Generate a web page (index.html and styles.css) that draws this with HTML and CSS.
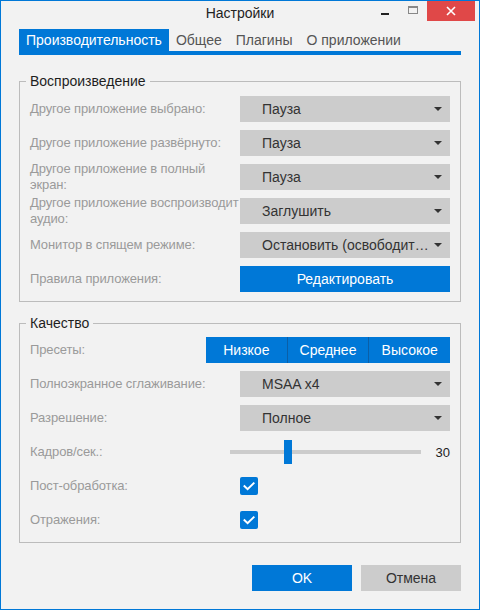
FILE: index.html
```html
<!DOCTYPE html>
<html lang="ru">
<head>
<meta charset="utf-8">
<title>Настройки</title>
<link rel="stylesheet" href="styles.css">
</head>
<body>
<div class="window">
  <div class="titlebar">
    <div class="tb-spacer"></div>
    <div class="title">Настройки</div>
    <div class="controls">
      <span class="ctl ctl-min"><span class="min-line"></span></span>
      <span class="ctl ctl-max"><span class="max-box"></span></span>
      <span class="ctl ctl-close">
        <svg width="10" height="10" viewBox="0 0 10 10"><path d="M1 1L9 9M9 1L1 9" stroke="#fff" stroke-width="1.6" fill="none"/></svg>
      </span>
    </div>
  </div>
  <div class="content">
    <div class="tabs">
      <span class="tab active">Производительность</span>
      <span class="tab">Общее</span>
      <span class="tab">Плагины</span>
      <span class="tab">О приложении</span>
    </div>

    <fieldset class="group group-first">
      <legend>Воспроизведение</legend>
      <div class="rows">
        <div class="row">
          <span class="label">Другое приложение выбрано:</span>
          <span class="select"><span class="sel-text">Пауза</span><span class="arrow"></span></span>
        </div>
        <div class="row">
          <span class="label">Другое приложение развёрнуто:</span>
          <span class="select"><span class="sel-text">Пауза</span><span class="arrow"></span></span>
        </div>
        <div class="row">
          <span class="label">Другое приложение в полный экран:</span>
          <span class="select"><span class="sel-text">Пауза</span><span class="arrow"></span></span>
        </div>
        <div class="row">
          <span class="label">Другое приложение воспроизводит аудио:</span>
          <span class="select"><span class="sel-text">Заглушить</span><span class="arrow"></span></span>
        </div>
        <div class="row">
          <span class="label">Монитор в спящем режиме:</span>
          <span class="select"><span class="sel-text">Остановить (освободит…</span><span class="arrow"></span></span>
        </div>
        <div class="row">
          <span class="label">Правила приложения:</span>
          <span class="btn btn-primary btn-wide">Редактировать</span>
        </div>
      </div>
    </fieldset>

    <fieldset class="group group-second">
      <legend>Качество</legend>
      <div class="rows">
        <div class="row">
          <span class="label">Пресеты:</span>
          <span class="presets">
            <span class="preset">Низкое</span>
            <span class="preset">Среднее</span>
            <span class="preset">Высокое</span>
          </span>
        </div>
        <div class="row">
          <span class="label">Полноэкранное сглаживание:</span>
          <span class="select"><span class="sel-text">MSAA x4</span><span class="arrow"></span></span>
        </div>
        <div class="row">
          <span class="label">Разрешение:</span>
          <span class="select"><span class="sel-text">Полное</span><span class="arrow"></span></span>
        </div>
        <div class="row">
          <span class="label">Кадров/сек.:</span>
          <span class="slider">
            <span class="track"><span class="thumb"></span></span>
            <span class="value">30</span>
          </span>
        </div>
        <div class="row">
          <span class="label">Пост-обработка:</span>
          <span class="check-wrap"><span class="checkbox"><svg width="18" height="18" viewBox="0 0 18 18"><path d="M4.5 9.2L7.6 12.2L13.6 6.3" stroke="#fff" stroke-width="2" fill="none" stroke-linecap="square"/></svg></span></span>
        </div>
        <div class="row">
          <span class="label">Отражения:</span>
          <span class="check-wrap"><span class="checkbox"><svg width="18" height="18" viewBox="0 0 18 18"><path d="M4.5 9.2L7.6 12.2L13.6 6.3" stroke="#fff" stroke-width="2" fill="none" stroke-linecap="square"/></svg></span></span>
        </div>
      </div>
    </fieldset>

    <div class="footer">
      <span class="btn btn-primary btn-dialog">OK</span>
      <span class="btn btn-secondary btn-dialog">Отмена</span>
    </div>
  </div>
</div>
</body>
</html>
```

FILE: styles.css
```css
* { box-sizing: border-box; }

html, body {
  margin: 0;
  padding: 0;
  background: #f2f2f2;
}

body {
  font-family: "Liberation Sans", Arial, sans-serif;
  font-size: 13px;
  color: #333;
}

.window {
  width: 480px;
  height: 610px;
  border: 1px solid #0078d7;
  background: #f2f2f2;
  display: flex;
  flex-direction: column;
}

.titlebar {
  height: 28px;
  display: grid;
  grid-template-columns: 1fr auto 1fr;
  align-items: start;
}

.title {
  font-size: 14px;
  line-height: 16px;
  margin-top: 4px;
  color: #222;
}

.controls {
  justify-self: end;
  display: flex;
  align-items: flex-start;
  margin-right: 4px;
}

.ctl {
  display: flex;
  align-items: center;
  justify-content: center;
  height: 20px;
}

.ctl-min { width: 28px; }
.min-line {
  display: block;
  width: 8px;
  height: 2px;
  background: #222;
  margin-top: 6px;
}

.ctl-max { width: 28px; }
.max-box {
  display: block;
  width: 10px;
  height: 8px;
  border: 1px solid #888;
  border-top-width: 2px;
  margin-top: -2px;
}

.ctl-close {
  width: 48px;
  background: #e04848;
}

.content {
  padding: 0 18px;
  display: flex;
  flex-direction: column;
}

.tabs {
  display: flex;
  border-bottom: 4px solid #0078d7;
  height: 26px;
}

.tab {
  font-size: 14px;
  line-height: 22px;
  padding: 0 7px;
  color: #555;
}

.tab.active {
  background: #0078d7;
  color: #fff;
}

.group {
  margin: 0;
  padding: 7px 10px 9px;
  border: 1px solid #bcbcbc;
  min-inline-size: 0;
}

.group-first { margin-top: 18px; }
.group-second {
  margin-top: 13px;
  padding-top: 6px;
}

.group legend {
  font-size: 14px;
  line-height: 16px;
  padding: 0 4px;
  margin-left: -4px;
  color: #1e1e1e;
}

.rows {
  display: flex;
  flex-direction: column;
  gap: 8px;
}

.row {
  display: flex;
  align-items: center;
  height: 26px;
}

.label {
  flex: 1;
  min-width: 0;
  color: #9a9a9a;
  line-height: 16px;
  letter-spacing: -0.12px;
}

.select {
  width: 210px;
  height: 26px;
  background: #cccccc;
  display: flex;
  align-items: center;
  padding-left: 22px;
  padding-right: 8px;
  font-size: 14px;
  color: #333;
}

.sel-text {
  flex: 1;
  min-width: 0;
  white-space: nowrap;
}

.arrow {
  width: 0;
  height: 0;
  border-left: 4px solid transparent;
  border-right: 4px solid transparent;
  border-top: 4px solid #333;
}

.btn {
  display: flex;
  align-items: center;
  justify-content: center;
  height: 26px;
  font-size: 14px;
}

.btn-primary {
  background: #0078d7;
  color: #fff;
}

.btn-secondary {
  background: #cccccc;
  color: #333;
}

.btn-wide { width: 210px; }

.presets {
  width: 244px;
  height: 26px;
  display: flex;
  background: #0078d7;
}

.preset {
  flex: 1;
  display: flex;
  align-items: center;
  justify-content: center;
  color: #fff;
  font-size: 14px;
}

.preset + .preset {
  border-left: 1px solid #0a5fa8;
}

.slider {
  width: 220px;
  display: flex;
  align-items: center;
}

.track {
  position: relative;
  width: 191px;
  height: 4px;
  background: #cccccc;
}

.thumb {
  position: absolute;
  left: 54px;
  top: -10px;
  width: 8px;
  height: 24px;
  background: #0078d7;
}

.value {
  flex: 1;
  text-align: right;
  font-size: 13px;
  color: #222;
}

.check-wrap {
  width: 210px;
  display: flex;
}

.checkbox {
  width: 18px;
  height: 18px;
  background: #0078d7;
  border-radius: 2px;
  display: block;
}

.checkbox svg { display: block; }

.footer {
  margin-top: 22px;
  display: flex;
  justify-content: flex-end;
  gap: 9px;
}

.btn-dialog { width: 100px; }
```
